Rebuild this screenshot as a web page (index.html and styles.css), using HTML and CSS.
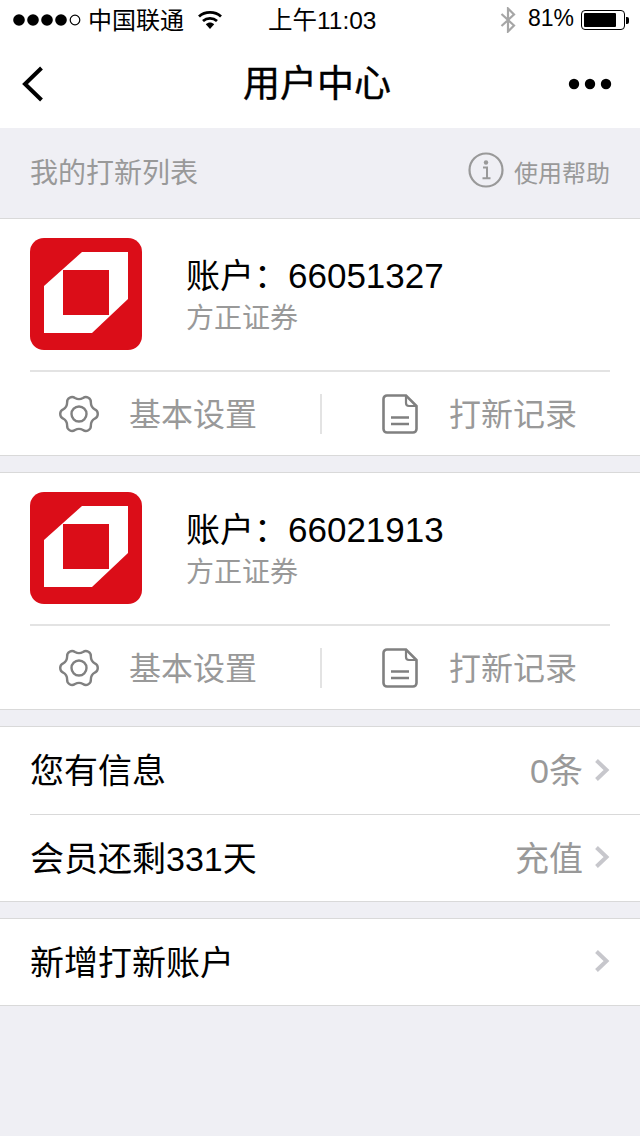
FILE: index.html
```html
<!DOCTYPE html>
<html lang="zh-CN">
  <head>
    <meta charset="UTF-8" />
    <title>用户中心</title>
    <meta name="viewport" content="width=device-width, initial-scale=1" />
    <link rel="stylesheet" href="styles.css">
  </head>
  <body>
    <svg class="defs" width="0" height="0">
      <symbol id="gear" viewBox="-1 -1 42 42">
        <path d="M35.86 15.45A5 5 0 0 1 35.86 24.55A8 8 0 0 0 31.87 31.46A5 5 0 0 1 23.99 36.01A8 8 0 0 0 16.01 36.01A5 5 0 0 1 8.13 31.46A8 8 0 0 0 4.14 24.55A5 5 0 0 1 4.14 15.45A8 8 0 0 0 8.13 8.54A5 5 0 0 1 16.01 3.99A8 8 0 0 0 23.99 3.99A5 5 0 0 1 31.87 8.54A8 8 0 0 0 35.86 15.45Z" fill="none" stroke="#808080" stroke-width="2.4"/>
        <circle cx="20" cy="20" r="7.5" fill="none" stroke="#808080" stroke-width="2.4"/>
      </symbol>
      <symbol id="doc" viewBox="0 0 36 40">
        <path d="M5 1.500H24L34.500 12V35a3.500 3.500 0 0 1-3.500 3.500H5A3.500 3.500 0 0 1 1.500 35V5A3.500 3.500 0 0 1 5 1.500Z" fill="none" stroke="#808080" stroke-width="2.600"/>
        <path d="M24 1.500V9a3 3 0 0 0 3 3h7.500" fill="none" stroke="#808080" stroke-width="2.200"/>
        <path d="M9 23.500H27M9 30H27" stroke="#808080" stroke-width="2.400"/>
      </symbol>
      <symbol id="logo" viewBox="0 0 112 112">
        <rect width="112" height="112" rx="14" fill="#db0d18"/>
        <path d="M52 14H98V61L62 95H14V48Z" fill="#fff"/>
        <rect x="33" y="32" width="46" height="45" fill="#db0d18"/>
      </symbol>
      <symbol id="chevron" viewBox="0 0 16 24">
        <path d="M2.500 2.500L12.500 12L2.500 21.500" fill="none" stroke="#c7c7cc" stroke-width="4"/>
      </symbol>
    </svg>

    <div class="status-bar">
      <svg class="signal" width="68" height="12" viewBox="0 0 68 12">
        <circle cx="6" cy="6" r="5.800"/><circle cx="20" cy="6" r="5.800"/><circle cx="34" cy="6" r="5.800"/><circle cx="48" cy="6" r="5.800"/>
        <circle cx="62" cy="6" r="4.800" fill="none" stroke="#000" stroke-width="1.200"/>
      </svg>
      <span class="status-text carrier">中国联通</span>
      <svg class="wifi" width="24" height="20" viewBox="0 0 24 20">
        <path d="M1 6.500C7 1 17 1 23 6.500" fill="none" stroke="#000" stroke-width="2.800"/>
        <path d="M5 11C9 7.500 15 7.500 19 11" fill="none" stroke="#000" stroke-width="2.800"/>
        <path d="M7.800 14.200C10.500 12 13.500 12 16.200 14.200L12 19Z"/>
      </svg>
      <span class="status-text clock">上午11:03</span>
      <svg class="bluetooth" width="16" height="26" viewBox="0 0 16 26">
        <path d="M1.500 7L14 18.500L8 24.500V1.500L14 7.500L1.500 19" fill="none" stroke="#a6a6a6" stroke-width="2.200"/>
      </svg>
      <span class="status-text battery-pct">81%</span>
      <div class="battery"><div class="battery-level"></div></div>
      <div class="battery-nub"></div>
    </div>

    <div class="nav-bar">
      <div class="nav-side">
        <svg class="back" width="22" height="36" viewBox="0 0 22 36">
          <path d="M19.500 2L3 18L19.500 34" fill="none" stroke="#000" stroke-width="4"/>
        </svg>
      </div>
      <div class="nav-title">用户中心</div>
      <div class="nav-side nav-side-right">
        <svg class="more" width="44" height="14" viewBox="0 0 44 14">
          <circle cx="6" cy="7" r="5.200"/><circle cx="22" cy="7" r="5.200"/><circle cx="38" cy="7" r="5.200"/>
        </svg>
      </div>
    </div>

    <div class="section-head">
      <span class="section-title">我的打新列表</span>
      <svg class="info" width="36" height="36" viewBox="0 0 36 36">
        <circle cx="18" cy="18" r="16.500" fill="none" stroke="#999" stroke-width="2.200"/>
        <circle cx="18" cy="10.500" r="2.200" fill="#999"/>
        <path d="M15 15.500H19V25.500M14.500 26.200H22.500" fill="none" stroke="#999" stroke-width="2"/>
      </svg>
      <span class="help">使用帮助</span>
    </div>

    <div class="card">
      <div class="account">
        <svg class="logo" width="112" height="112"><use href="#logo"/></svg>
        <div>
          <div class="account-no"><span class="account-label">账户：</span>66051327</div>
          <div class="broker">方正证券</div>
        </div>
      </div>
      <div class="actions">
        <div class="action action-left">
          <svg class="icon" width="42" height="42"><use href="#gear"/></svg>
          <span class="action-text">基本设置</span>
        </div>
        <div class="action action-right">
          <svg class="icon" width="36" height="40"><use href="#doc"/></svg>
          <span class="action-text">打新记录</span>
        </div>
      </div>
    </div>

    <div class="card">
      <div class="account">
        <svg class="logo" width="112" height="112"><use href="#logo"/></svg>
        <div>
          <div class="account-no"><span class="account-label">账户：</span>66021913</div>
          <div class="broker">方正证券</div>
        </div>
      </div>
      <div class="actions">
        <div class="action action-left">
          <svg class="icon" width="42" height="42"><use href="#gear"/></svg>
          <span class="action-text">基本设置</span>
        </div>
        <div class="action action-right">
          <svg class="icon" width="36" height="40"><use href="#doc"/></svg>
          <span class="action-text">打新记录</span>
        </div>
      </div>
    </div>

    <div class="list">
      <div class="row row-line">
        <span class="row-label">您有信息</span>
        <span class="row-value">0条</span>
        <svg class="chevron" width="16" height="24"><use href="#chevron"/></svg>
      </div>
      <div class="row">
        <span class="row-label">会员还剩331天</span>
        <span class="row-value">充值</span>
        <svg class="chevron" width="16" height="24"><use href="#chevron"/></svg>
      </div>
    </div>

    <div class="list">
      <div class="row">
        <span class="row-label">新增打新账户</span>
        <svg class="chevron" width="16" height="24"><use href="#chevron"/></svg>
      </div>
    </div>
  </body>
</html>
```

FILE: styles.css
```css
* {
  box-sizing: border-box;
}

html,
body {
  height: 100%;
}

body {
  margin: 0;
  background: #efeff4;
  color: #000;
  font-family: "Liberation Sans", "Noto Sans CJK SC", sans-serif;
}

.defs {
  display: block;
  height: 0;
}

.status-bar {
  height: 40px;
  background: #fff;
  display: flex;
  align-items: center;
  padding-left: 13px;
}

.status-text {
  font-size: 24px;
  margin-bottom: 3px;
}

.signal {
  flex: none;
}

.carrier {
  margin-left: 7px;
}

.wifi {
  margin-left: 14px;
  margin-top: -1px;
}

.clock {
  margin-left: 46px;
  font-size: 24.500px;
}

.bluetooth {
  margin-left: auto;
}

.battery-pct {
  margin-left: 12px;
  font-size: 23px;
}

.battery {
  width: 44px;
  height: 20px;
  margin-left: 7px;
  border: 1.500px solid #000;
  border-radius: 4px;
  padding: 2px;
}

.battery-level {
  width: 85%;
  height: 100%;
  background: #000;
  border-radius: 1px;
}

.battery-nub {
  width: 3px;
  height: 7px;
  margin-left: 1px;
  margin-right: 11px;
  background: #000;
  border-radius: 0 2px 2px 0;
}

.nav-bar {
  height: 88px;
  background: #fff;
  display: flex;
  align-items: center;
  padding: 0 28px 0 22px;
}

.nav-side {
  flex: 1;
  display: flex;
}

.nav-side-right {
  justify-content: flex-end;
}

.nav-title {
  font-size: 37px;
  margin-bottom: 6px;
  -webkit-text-stroke: 0.4px #000;
}

.section-head {
  height: 90px;
  display: flex;
  align-items: center;
  padding: 0 30px 6px;
  color: #999;
}

.section-title {
  font-size: 28px;
  margin-top: 2px;
  margin-right: auto;
}

.info {
  margin-right: 10px;
}

.help {
  font-size: 24px;
  margin-top: 2px;
}

.card {
  height: 238px;
  margin-bottom: 16px;
  background: #fff;
  border-top: 1px solid #d9d9d9;
  border-bottom: 1px solid #d9d9d9;
  padding: 19px 30px 0;
}

.account {
  height: 134px;
  display: flex;
  gap: 44px;
  border-bottom: 2px solid #e3e3e3;
}

.logo {
  flex: none;
}

.account-no {
  margin-top: 16px;
  height: 44px;
  line-height: 44px;
  font-size: 35px;
  white-space: nowrap;
}

.account-label {
  font-size: 34px;
}

.broker {
  height: 42px;
  line-height: 42px;
  font-size: 28px;
  color: #999;
}

.actions {
  display: flex;
  height: 83px;
  align-items: center;
}

.action {
  height: 40px;
  display: flex;
  align-items: center;
  font-size: 32px;
  color: #999;
}

.action-left {
  width: 292px;
  padding-left: 28px;
  border-right: 2px solid #e3e3e3;
}

.action-right {
  width: 288px;
  padding-left: 60px;
}

.action-text {
  margin-bottom: 4px;
}

.icon {
  flex: none;
  margin-right: 29px;
}

.action-right .icon {
  margin-right: 31px;
}

.list {
  margin-bottom: 16px;
  background: #fff;
  border-top: 1px solid #d9d9d9;
  border-bottom: 1px solid #d9d9d9;
  padding-left: 30px;
}

.row {
  height: 86px;
  display: flex;
  align-items: center;
  padding: 0 30px 2px 0;
  font-size: 34px;
}

.row-line {
  height: 88px;
  border-bottom: 1px solid #d9d9d9;
}

.row-label {
  margin-right: auto;
  margin-bottom: 2px;
}

.row-value {
  color: #999;
  margin-bottom: 2px;
}

.chevron {
  margin-left: 11px;
}
```
